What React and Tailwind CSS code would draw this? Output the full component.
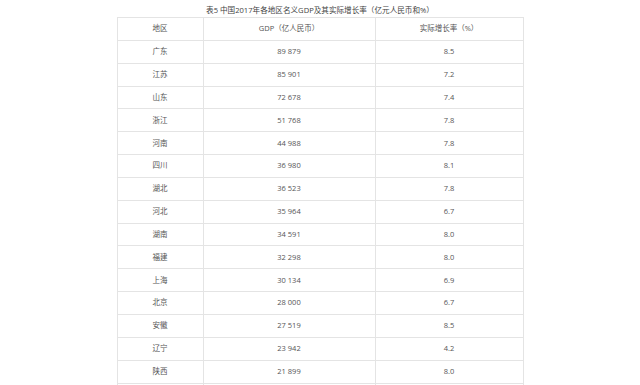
const rows = [
  ["广东", "89 879", "8.5"],
  ["江苏", "85 901", "7.2"],
  ["山东", "72 678", "7.4"],
  ["浙江", "51 768", "7.8"],
  ["河南", "44 988", "7.8"],
  ["四川", "36 980", "8.1"],
  ["湖北", "36 523", "7.8"],
  ["河北", "35 964", "6.7"],
  ["湖南", "34 591", "8.0"],
  ["福建", "32 298", "8.0"],
  ["上海", "30 134", "6.9"],
  ["北京", "28 000", "6.7"],
  ["安徽", "27 519", "8.5"],
  ["辽宁", "23 942", "4.2"],
  ["陕西", "21 899", "8.0"],
  ["", "", ""],
];

function Row({ cells }) {
  return (
    <div className="flex h-[22.85px] border-b border-[#e4e4e4]">
      <div className="w-[86px] flex items-center justify-center border-r border-[#e4e4e4]">{cells[0]}</div>
      <div className="w-[172px] flex items-center justify-center border-r border-[#e4e4e4]">{cells[1]}</div>
      <div className="flex-1 flex items-center justify-center">{cells[2]}</div>
    </div>
  );
}

export default function App() {
  return (
    <div
      className="w-[640px] h-[385px] overflow-hidden bg-white text-[#555]"
      style={{ fontFamily: '"Open Sans", "Noto Sans CJK SC", sans-serif' }}
    >
      <div className="mx-auto w-[407px]">
        <div className="h-[17px] pt-[3px] text-center text-[7.6px] leading-[14px] text-[#444]">
          表5 中国2017年各地区名义GDP及其实际增长率（亿元人民币和%）
        </div>
        <div className="border-t border-l border-r border-[#e4e4e4] text-[7.5px]">
          <Row cells={["地区", "GDP（亿人民币）", "实际增长率（%）"]} />
          {rows.map((r, i) => (
            <Row key={i} cells={r} />
          ))}
        </div>
      </div>
    </div>
  );
}
